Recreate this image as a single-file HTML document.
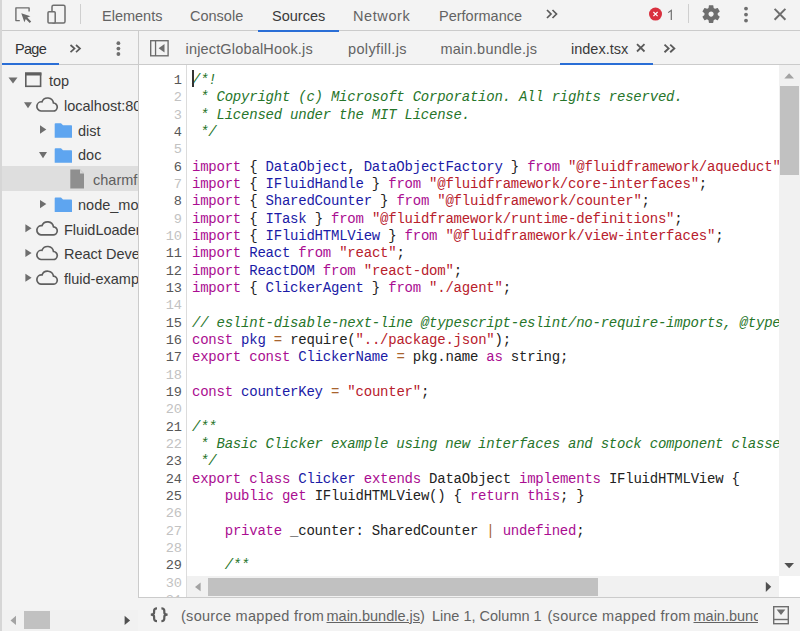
<!DOCTYPE html>
<html><head><meta charset="utf-8">
<style>
*{box-sizing:border-box}
html,body{margin:0;padding:0}
body{width:800px;height:631px;overflow:hidden;position:relative;background:#f3f3f3;font-family:"Liberation Sans",sans-serif;font-size:14.5px;color:#636363}
.a{position:absolute;white-space:pre;line-height:18px}
.bl{position:absolute;background:#cbcbcb}
svg{position:absolute;overflow:visible}
#code{position:absolute;left:187px;top:65px;width:593px;height:511px;background:#fff;overflow:hidden}
#gut{position:absolute;left:139px;top:65px;width:47px;height:533px;background:#fff;overflow:hidden}
.ln{position:absolute;right:4px;font-family:"Liberation Mono",monospace;font-size:13.62px;line-height:17.33px;white-space:pre}
.cl{position:absolute;left:5px;font-family:"Liberation Mono",monospace;font-size:14px;letter-spacing:-0.228px;line-height:17.33px;white-space:pre;color:#222}
.k{color:#aa0d91}.s{color:#b8202c}.c{color:#26752a;font-style:italic}.d{color:#1a1aa6}.o{color:#a8642e}
.dk{color:#575757}.lt{color:#c2c2c2}
</style></head><body>
<!-- left window strip -->
<div style="position:absolute;left:0;top:0;width:2px;height:631px;background:#d6d6d6"></div>
<!-- top toolbar border -->
<div class="bl" style="left:2px;top:30px;width:798px;height:1px"></div>
<!-- inspect icon -->
<svg style="left:0;top:0" width="800" height="30">
 <path d="M19.8 20.6 H15.9 V7.9 H29.1 V11.5" fill="none" stroke="#6e6e6e" stroke-width="1.4" stroke-linejoin="round"/>
 <path d="M21.3 13.2 L30.4 16.2 L27.3 17.5 L31.2 21.4 L29.7 22.9 L25.8 19 L24.4 22.3 Z" fill="#6a6a6a"/>
 <rect x="52" y="5.2" width="13" height="17.8" rx="1.5" fill="none" stroke="#6e6e6e" stroke-width="1.5"/>
 <rect x="48" y="11.8" width="7.2" height="11.2" rx="1" fill="#f3f3f3" stroke="#6e6e6e" stroke-width="1.5"/>
 <rect x="80" y="4" width="1" height="20" fill="#cfcfcf"/>
</svg>
<div class="a" style="left:102px;top:7px">Elements</div>
<div class="a" style="left:190px;top:7px">Console</div>
<div class="a" style="left:272px;top:7px;color:#3a3a3a">Sources</div>
<div style="position:absolute;left:258px;top:30px;width:80.5px;height:2px;background:#2a6ed6"></div>
<div class="a" style="left:353px;top:7px;letter-spacing:0.6px">Network</div>
<div class="a" style="left:439px;top:7px">Performance</div>
<svg style="left:0;top:0" width="800" height="30">
 <path d="M547 10 L551 14 L547 18 M552.5 10 L556.5 14 L552.5 18" fill="none" stroke="#5a5a5a" stroke-width="1.7"/>
 <circle cx="655.5" cy="14.1" r="6.5" fill="#d9303e"/>
 <path d="M653.4 12 L657.6 16.2 M657.6 12 L653.4 16.2" stroke="#fff" stroke-width="1.15"/>
 <path d="M668.2 12.6 L671.3 10.4 V20" fill="none" stroke="#6a6a6a" stroke-width="1.15"/>
 <rect x="688" y="4" width="1" height="19" fill="#cfcfcf"/>
 <circle cx="746" cy="8.6" r="1.9" fill="#6e6e6e"/><circle cx="746" cy="14.6" r="1.9" fill="#6e6e6e"/><circle cx="746" cy="20.6" r="1.9" fill="#6e6e6e"/>
 <path d="M774.6 8.9 L785.4 19.8 M785.4 8.9 L774.6 19.8" stroke="#6e6e6e" stroke-width="2"/>
</svg>
<svg style="left:699.5px;top:3.3px" width="22.2" height="22.2" viewBox="0 0 24 24">
 <path fill="#6e6e6e" d="M19.14 12.94c.04-.3.06-.61.06-.94 0-.32-.02-.64-.07-.94l2.03-1.58a.49.49 0 0 0 .12-.61l-1.92-3.32a.49.49 0 0 0-.59-.22l-2.39.96c-.5-.38-1.03-.7-1.62-.94l-.36-2.54a.48.48 0 0 0-.48-.41h-3.84c-.24 0-.43.17-.47.41l-.36 2.54c-.59.24-1.13.57-1.62.94l-2.39-.96a.48.48 0 0 0-.59.22L2.74 8.87c-.12.21-.08.47.12.61l2.03 1.58c-.05.3-.09.63-.09.94s.02.64.07.94l-2.03 1.58a.49.49 0 0 0-.12.61l1.92 3.32c.12.22.37.29.59.22l2.39-.96c.5.38 1.03.7 1.62.94l.36 2.54c.05.24.24.41.48.41h3.84c.24 0 .44-.17.47-.41l.36-2.54c.59-.24 1.13-.56 1.62-.94l2.39.96c.22.08.47 0 .59-.22l1.92-3.32c.12-.22.07-.47-.12-.61l-2.01-1.58zM12 14.8c-1.55 0-2.8-1.25-2.8-2.8s1.25-2.8 2.8-2.8 2.8 1.25 2.8 2.8-1.25 2.8-2.8 2.8z"/>
</svg>

<!-- sidebar header -->
<div class="bl" style="left:138px;top:31px;width:1px;height:567px"></div>
<div class="bl" style="left:2px;top:64px;width:798px;height:1px"></div>
<div class="a" style="left:15px;top:40px;color:#333;letter-spacing:-0.7px">Page</div>
<div style="position:absolute;left:2px;top:63px;width:56.5px;height:2px;background:#2a6ed6"></div>
<svg style="left:0;top:0" width="800" height="65">
 <path d="M70.5 45 L74.5 48.6 L70.5 52.2 M76 45 L80 48.6 L76 52.2" fill="none" stroke="#5a5a5a" stroke-width="1.7"/>
 <circle cx="118.4" cy="43.2" r="1.9" fill="#6e6e6e"/><circle cx="118.4" cy="48.6" r="1.9" fill="#6e6e6e"/><circle cx="118.4" cy="54" r="1.9" fill="#6e6e6e"/>
 <rect x="150.7" y="40.7" width="17.4" height="15.1" fill="none" stroke="#6a6a6a" stroke-width="1.35"/>
 <rect x="154.9" y="41" width="1.3" height="15" fill="#6a6a6a"/>
 <path d="M164.5 44 L164.5 52.6 L158.6 48.3 Z" fill="#6e6e6e"/>
 <path d="M664.5 44.6 L668.6 48.4 L664.5 52.2 M670.2 44.6 L674.3 48.4 L670.2 52.2" fill="none" stroke="#5a5a5a" stroke-width="1.9"/>
 <path d="M637 44.2 L644.5 51.5 M644.5 44.2 L637 51.5" stroke="#5a5a5a" stroke-width="1.8"/>
</svg>
<div class="a" style="left:185.5px;top:40px;letter-spacing:0.17px">injectGlobalHook.js</div>
<div class="a" style="left:348px;top:40px;letter-spacing:0.37px">polyfill.js</div>
<div class="a" style="left:440.5px;top:40px;letter-spacing:0.23px">main.bundle.js</div>
<div class="a" style="left:571px;top:40px;color:#3a3a3a">index.tsx</div>
<div style="position:absolute;left:559.5px;top:63px;width:93.5px;height:2px;background:#2a6ed6"></div>

<!-- tree -->
<div style="position:absolute;left:2px;top:166px;width:136px;height:25px;background:#dedede"></div>
<svg style="left:0;top:0" width="140" height="300">
 <path d="M8.5 77.5 H17.5 L13 83.5 Z" fill="#6e6e6e"/>
 <rect x="25.8" y="73.3" width="14.8" height="13" fill="none" stroke="#5f5f5f" stroke-width="1.6"/>
 <rect x="25" y="72.5" width="16.4" height="3" fill="#5f5f5f"/>
 <path d="M24 102.3 H32 L28 108.3 Z" fill="#6e6e6e"/>
 <path d="M41 111 H53 A4 4 0 0 0 53.5 103 A6 6 0 0 0 42 101.8 A4.6 4.6 0 0 0 41 111 Z" fill="none" stroke="#5f5f5f" stroke-width="1.7"/>
 <path d="M40 125.3 V133.8 L46.3 129.5 Z" fill="#6e6e6e"/>
 <path d="M54.7 124 Q54.7 123.2 55.5 123.2 H61 L63 125.3 H71.3 Q72 125.3 72 126 V137.8 H54.7 Z" fill="#5ea5f0"/>
 <path d="M39 152 H47 L43 158.2 Z" fill="#6e6e6e"/>
 <path d="M54.7 149 Q54.7 148.2 55.5 148.2 H61 L63 150.3 H71.3 Q72 150.3 72 151 V162.8 H54.7 Z" fill="#5ea5f0"/>
 <path d="M70.3 169.5 H80 L84 173.5 V188.5 H70.3 Z" fill="#8f8f8f"/>
 <path d="M80 169.5 V173.5 H84 Z" fill="#d8d8d8"/>
 <path d="M40 200 V208.2 L46.3 204 Z" fill="#6e6e6e"/>
 <path d="M54.7 198.3 Q54.7 197.6 55.5 197.6 H61 L63 199.6 H71.3 Q72 199.6 72 200.4 V212.1 H54.7 Z" fill="#5ea5f0"/>
 <path d="M25.4 224.3 V232.3 L31.6 228.3 Z" fill="#6e6e6e"/>
 <path transform="translate(0 123.8)" d="M41 111 H53 A4 4 0 0 0 53.5 103 A6 6 0 0 0 42 101.8 A4.6 4.6 0 0 0 41 111 Z" fill="none" stroke="#5f5f5f" stroke-width="1.7"/>
 <path d="M25.4 249 V257 L31.6 253 Z" fill="#6e6e6e"/>
 <path transform="translate(0 148.5)" d="M41 111 H53 A4 4 0 0 0 53.5 103 A6 6 0 0 0 42 101.8 A4.6 4.6 0 0 0 41 111 Z" fill="none" stroke="#5f5f5f" stroke-width="1.7"/>
 <path d="M25.4 273.7 V281.7 L31.6 277.7 Z" fill="#6e6e6e"/>
 <path transform="translate(0 173.2)" d="M41 111 H53 A4 4 0 0 0 53.5 103 A6 6 0 0 0 42 101.8 A4.6 4.6 0 0 0 41 111 Z" fill="none" stroke="#5f5f5f" stroke-width="1.7"/>
</svg>
<div style="position:absolute;left:0;top:65px;width:138px;height:240px;overflow:hidden">
<div class="a" style="left:49px;top:7px;color:#3a3a3a">top</div>
<div class="a" style="left:64px;top:32px;color:#3a3a3a">localhost:8080</div>
<div class="a" style="left:78px;top:57px;color:#3a3a3a">dist</div>
<div class="a" style="left:78px;top:81px;color:#3a3a3a">doc</div>
<div class="a" style="left:93px;top:106px;color:#5f5f5f">charmfile</div>
<div class="a" style="left:78px;top:131px;color:#3a3a3a">node_modules</div>
<div class="a" style="left:64px;top:156px;color:#3a3a3a">FluidLoader</div>
<div class="a" style="left:64px;top:180px;color:#3a3a3a">React Developer</div>
<div class="a" style="left:64px;top:205px;color:#3a3a3a">fluid-example</div>
</div>

<!-- sidebar h-scrollbar -->
<div style="position:absolute;left:2px;top:610px;width:136px;height:21px;background:#f1f1f1"></div>
<div style="position:absolute;left:23.5px;top:611px;width:26.5px;height:18px;background:#c1c1c1"></div>
<svg style="left:0;top:600px" width="140" height="31">
 <path d="M16 15.8 V25 L10.5 20.4 Z" fill="#a3a3a3"/>
 <path d="M124.6 15.8 V25 L130.1 20.4 Z" fill="#505050"/>
</svg>

<!-- gutter & code -->
<div id="gut">
<div class="ln dk" style="top:7.00px">1</div>
<div class="ln lt" style="top:24.33px">2</div>
<div class="ln lt" style="top:41.66px">3</div>
<div class="ln dk" style="top:58.99px">4</div>
<div class="ln lt" style="top:76.32px">5</div>
<div class="ln dk" style="top:93.65px">6</div>
<div class="ln lt" style="top:110.98px">7</div>
<div class="ln dk" style="top:128.31px">8</div>
<div class="ln lt" style="top:145.64px">9</div>
<div class="ln lt" style="top:162.97px">10</div>
<div class="ln dk" style="top:180.30px">11</div>
<div class="ln dk" style="top:197.63px">12</div>
<div class="ln dk" style="top:214.96px">13</div>
<div class="ln lt" style="top:232.29px">14</div>
<div class="ln dk" style="top:249.62px">15</div>
<div class="ln dk" style="top:266.95px">16</div>
<div class="ln dk" style="top:284.28px">17</div>
<div class="ln lt" style="top:301.61px">18</div>
<div class="ln dk" style="top:318.94px">19</div>
<div class="ln lt" style="top:336.27px">20</div>
<div class="ln dk" style="top:353.60px">21</div>
<div class="ln lt" style="top:370.93px">22</div>
<div class="ln dk" style="top:388.26px">23</div>
<div class="ln dk" style="top:405.59px">24</div>
<div class="ln dk" style="top:422.92px">25</div>
<div class="ln lt" style="top:440.25px">26</div>
<div class="ln lt" style="top:457.58px">27</div>
<div class="ln lt" style="top:474.91px">28</div>
<div class="ln dk" style="top:492.24px">29</div>
<div class="ln lt" style="top:509.57px">30</div>
<div class="ln lt" style="top:526.90px">31</div>
</div>
<div style="position:absolute;left:186px;top:65px;width:1px;height:533px;background:#dcdcdc"></div>
<div style="position:absolute;left:192px;top:70px;width:1.6px;height:17px;background:#333;z-index:5"></div>
<div id="code">
<div class="cl" style="top:7.00px"><span class="c">/*!</span></div>
<div class="cl" style="top:24.33px"><span class="c"> * Copyright (c) Microsoft Corporation. All rights reserved.</span></div>
<div class="cl" style="top:41.66px"><span class="c"> * Licensed under the MIT License.</span></div>
<div class="cl" style="top:58.99px"><span class="c"> */</span></div>
<div class="cl" style="top:76.32px"></div>
<div class="cl" style="top:93.65px"><span class="k">import</span> { <span class="d">DataObject</span>, <span class="d">DataObjectFactory</span> } <span class="k">from</span> <span class="s">"@fluidframework/aqueduct"</span>;</div>
<div class="cl" style="top:110.98px"><span class="k">import</span> { <span class="d">IFluidHandle</span> } <span class="k">from</span> <span class="s">"@fluidframework/core-interfaces"</span>;</div>
<div class="cl" style="top:128.31px"><span class="k">import</span> { <span class="d">SharedCounter</span> } <span class="k">from</span> <span class="s">"@fluidframework/counter"</span>;</div>
<div class="cl" style="top:145.64px"><span class="k">import</span> { <span class="d">ITask</span> } <span class="k">from</span> <span class="s">"@fluidframework/runtime-definitions"</span>;</div>
<div class="cl" style="top:162.97px"><span class="k">import</span> { <span class="d">IFluidHTMLView</span> } <span class="k">from</span> <span class="s">"@fluidframework/view-interfaces"</span>;</div>
<div class="cl" style="top:180.30px"><span class="k">import</span> <span class="d">React</span> <span class="k">from</span> <span class="s">"react"</span>;</div>
<div class="cl" style="top:197.63px"><span class="k">import</span> <span class="d">ReactDOM</span> <span class="k">from</span> <span class="s">"react-dom"</span>;</div>
<div class="cl" style="top:214.96px"><span class="k">import</span> { <span class="d">ClickerAgent</span> } <span class="k">from</span> <span class="s">"./agent"</span>;</div>
<div class="cl" style="top:232.29px"></div>
<div class="cl" style="top:249.62px"><span class="c">// eslint-disable-next-line @typescript-eslint/no-require-imports, @typescript-eslint/no-var-requires</span></div>
<div class="cl" style="top:266.95px"><span class="k">const</span> <span class="d">pkg</span> <span class="o">=</span> require(<span class="s">"../package.json"</span>);</div>
<div class="cl" style="top:284.28px"><span class="k">export</span> <span class="k">const</span> <span class="d">ClickerName</span> <span class="o">=</span> pkg.name <span class="k">as</span> string;</div>
<div class="cl" style="top:301.61px"></div>
<div class="cl" style="top:318.94px"><span class="k">const</span> <span class="d">counterKey</span> <span class="o">=</span> <span class="s">"counter"</span>;</div>
<div class="cl" style="top:336.27px"></div>
<div class="cl" style="top:353.60px"><span class="c">/**</span></div>
<div class="cl" style="top:370.93px"><span class="c"> * Basic Clicker example using new interfaces and stock component classes.</span></div>
<div class="cl" style="top:388.26px"><span class="c"> */</span></div>
<div class="cl" style="top:405.59px"><span class="k">export</span> <span class="k">class</span> <span class="d">Clicker</span> <span class="k">extends</span> DataObject <span class="k">implements</span> IFluidHTMLView {</div>
<div class="cl" style="top:422.92px">    <span class="k">public</span> <span class="k">get</span> IFluidHTMLView() { <span class="k">return</span> <span class="k">this</span>; }</div>
<div class="cl" style="top:440.25px"></div>
<div class="cl" style="top:457.58px">    <span class="k">private</span> _counter: SharedCounter <span class="o">|</span> <span class="k">undefined</span>;</div>
<div class="cl" style="top:474.91px"></div>
<div class="cl" style="top:492.24px"><span class="c">    /**</span></div>
<div class="cl" style="top:509.57px"><span class="c">     * Do setup work here</span></div>
<div class="cl" style="top:526.90px"><span class="c">     */</span></div>
</div>

<!-- v scrollbar -->
<div style="position:absolute;left:779px;top:65px;width:21px;height:511px;background:#f1f1f1"></div>
<div style="position:absolute;left:780px;top:86px;width:19px;height:89px;background:#c1c1c1"></div>
<svg style="left:779px;top:65px" width="21" height="511">
 <path d="M5.3 13.5 H15 L10.15 8.3 Z" fill="#a3a3a3"/>
 <path d="M5.3 498 H15 L10.15 503.2 Z" fill="#505050"/>
</svg>
<!-- h scrollbar -->
<div style="position:absolute;left:187px;top:576px;width:592px;height:21px;background:#f1f1f1"></div>
<div style="position:absolute;left:208px;top:578px;width:390px;height:17.5px;background:#c1c1c1"></div>
<div style="position:absolute;left:779px;top:576px;width:21px;height:21px;background:#fff"></div>
<svg style="left:187px;top:576px" width="592" height="21">
 <path d="M13.6 6.5 V15.3 L8 10.9 Z" fill="#a3a3a3"/>
 <path d="M578.8 5.8 V15.9 L584.2 10.85 Z" fill="#505050"/>
</svg>

<!-- status bar -->
<div class="bl" style="left:139px;top:597px;width:661px;height:1px"></div>
<svg style="left:0;top:598px" width="800" height="33">
 <path d="M157 10.3 Q154.1 10.3 154.1 12.8 V14.6 Q154.1 16.7 150.8 16.7 Q154.1 16.7 154.1 18.8 V20.6 Q154.1 23.2 157 23.2 M161.4 10.3 Q164.3 10.3 164.3 12.8 V14.6 Q164.3 16.7 167.6 16.7 Q164.3 16.7 164.3 18.8 V20.6 Q164.3 23.2 161.4 23.2" fill="none" stroke="#5c5c5c" stroke-width="2.2"/>
 <rect x="773.7" y="8.7" width="14.6" height="17" fill="none" stroke="#6e6e6e" stroke-width="1.4"/>
 <path d="M773.7 21.5 H788.3" stroke="#6e6e6e" stroke-width="1.4"/>
 <path d="M776.6 11.5 H785.4 L781 17 Z" fill="#6e6e6e"/>
</svg>
<div style="position:absolute;left:139px;top:598px;width:619px;height:33px;overflow:hidden">
<div class="a" style="left:42px;top:9px;letter-spacing:0.28px">(source mapped from</div>
<div class="a" style="left:187.5px;top:9px"><u>main.bundle.js</u>)</div>
<div class="a" style="left:293px;top:9px">Line 1, Column 1</div>
<div class="a" style="left:408.5px;top:9px;letter-spacing:0.28px">(source mapped from</div>
<div class="a" style="left:554.5px;top:9px"><u>main.bundle.js</u>)</div>
</div>
</body></html>
